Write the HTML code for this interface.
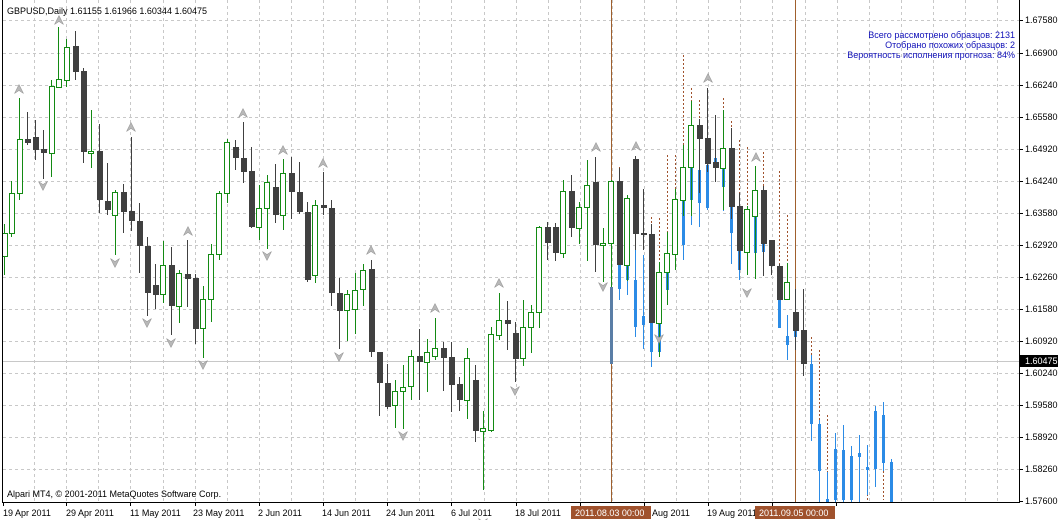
<!DOCTYPE html>
<html><head><meta charset="utf-8"><style>
html,body{margin:0;padding:0;background:#fff;}
body{width:1058px;height:520px;overflow:hidden;position:relative;font-family:"Liberation Sans","DejaVu Sans",sans-serif;}
svg{position:absolute;left:0;top:0;}
text{font-family:"Liberation Sans","DejaVu Sans",sans-serif;font-size:9px;}
</style></head><body>
<svg width="1058" height="520" viewBox="0 0 1058 520" xmlns="http://www.w3.org/2000/svg">
<g stroke="#c8c8c8" stroke-width="1" stroke-dasharray="3,3">
<path d="M3 20.5H1019M3 53.5H1019M3 85.5H1019M3 117.5H1019M3 149.5H1019M3 181.5H1019M3 213.5H1019M3 245.5H1019M3 277.5H1019M3 309.5H1019M3 341.5H1019M3 373.5H1019M3 405.5H1019M3 437.5H1019M3 469.5H1019"/>
<path d="M34.5 0V502M66.5 0V502M98.5 0V502M130.5 0V502M163.5 0V502M195.5 0V502M227.5 0V502M259.5 0V502M291.5 0V502M323.5 0V502M355.5 0V502M387.5 0V502M419.5 0V502M451.5 0V502M484.5 0V502M516.5 0V502M548.5 0V502M580.5 0V502M612.5 0V502M644.5 0V502M676.5 0V502M708.5 0V502M740.5 0V502M772.5 0V502M805.5 0V502M837.5 0V502M869.5 0V502M901.5 0V502M933.5 0V502M965.5 0V502M997.5 0V502"/>
</g>
<path d="M3 361.5H1019" stroke="#c8c8c8"/>
<path d="M611.5 0V502M795.5 0V502" stroke="#a0602d"/>
<g stroke="#a0522d" stroke-dasharray="2,2">
<path d="M619.5 167V181M651.5 217V233M659.5 218V272M667.5 155V253M675.5 155V199M683.5 55V166M691.5 88V125M699.5 100V125M723.5 98V148M731.5 121V148M739.5 140V206M747.5 147V209M763.5 152V190M779.5 171V266M787.5 215V282M811.5 337V364M819.5 350V423M827.5 415V498M867.5 470V500M883.5 463V500"/>
</g>
<g stroke="#2b8be6" fill="#2b8be6">
<path d="M619.5 265V300M627.5 266V295M635.5 250V337M643.5 255V349M651.5 323V367M659.5 323V352M667.5 272V305M683.5 200V260M691.5 168V225M699.5 170V227M707.5 165V210M715.5 115V182M723.5 168V211M731.5 207V264M739.5 250V280M755.5 217V265M763.5 244V260M779.5 300V328M787.5 315V360M795.5 331V350M811.5 355V441M819.5 420V503M827.5 472V503M835.5 433V503M843.5 425V503M851.5 446V503M859.5 435V503M867.5 445V495M875.5 406V487M883.5 402V471M891.5 459V503"/>
<g stroke="none">
<rect x="618" y="265" width="3" height="24"/><rect x="626" y="266" width="3" height="14"/><rect x="634" y="280" width="3" height="47"/><rect x="642" y="316" width="3" height="9"/><rect x="650" y="323" width="3" height="29"/><rect x="658" y="323" width="3" height="29"/><rect x="666" y="272" width="3" height="18"/><rect x="682" y="200" width="3" height="45"/><rect x="690" y="168" width="3" height="32"/><rect x="698" y="170" width="3" height="33"/><rect x="706" y="165" width="3" height="43"/><rect x="714" y="158" width="3" height="10"/><rect x="722" y="168" width="3" height="19"/><rect x="730" y="207" width="3" height="26"/><rect x="738" y="250" width="3" height="20"/><rect x="754" y="217" width="3" height="36"/><rect x="762" y="244" width="3" height="8"/><rect x="778" y="300" width="3" height="28"/><rect x="786" y="336" width="3" height="9"/><rect x="794" y="331" width="3" height="6"/><rect x="810" y="364" width="3" height="60"/><rect x="818" y="424" width="3" height="47"/><rect x="826" y="499" width="3" height="4"/><rect x="834" y="449" width="3" height="51"/><rect x="842" y="450" width="3" height="50"/><rect x="850" y="456" width="3" height="44"/><rect x="858" y="453" width="3" height="4"/><rect x="866" y="467" width="3" height="3"/><rect x="874" y="411" width="3" height="58"/><rect x="882" y="415" width="3" height="48"/><rect x="890" y="462" width="3" height="41"/>
</g></g>
<rect x="610" y="287" width="3" height="77" fill="#5a7ea6"/>
<g stroke="#404040" fill="#404040">
<path d="M27.5 112V145M35.5 120V160M43.5 130V179M75.5 31V80M83.5 68V163M99.5 124V213M107.5 163V215M123.5 184V233M131.5 137V231M139.5 203V273M147.5 237V316M155.5 264V309M171.5 247V335M187.5 240V307M195.5 274V344M235.5 140V170M243.5 122V183M251.5 147V228M275.5 164V223M291.5 157V219M299.5 162V214M307.5 202V282M323.5 172V215M331.5 200V306M339.5 278V349M371.5 260V357M379.5 352V416M387.5 364V409M419.5 329V400M443.5 342V391M451.5 342V412M459.5 377V411M475.5 365V442M507.5 301V350M515.5 322V382M547.5 222V260M555.5 223V261M571.5 175V237M595.5 157V272M619.5 168V265M635.5 156V250M643.5 189V250M651.5 224V323M699.5 119V193M707.5 88V172M715.5 115V182M731.5 128V219M739.5 193V270M763.5 186V276M771.5 240V275M779.5 264V300M795.5 289V350M803.5 289V376"/>
<g stroke="none">
<rect x="25" y="139" width="6" height="4"/><rect x="33" y="137" width="6" height="13"/><rect x="41" y="149" width="6" height="4"/><rect x="73" y="46" width="6" height="26"/><rect x="81" y="71" width="6" height="81"/><rect x="97" y="151" width="6" height="49"/><rect x="105" y="201" width="6" height="9"/><rect x="121" y="192" width="6" height="20"/><rect x="129" y="211" width="6" height="10"/><rect x="137" y="221" width="6" height="25"/><rect x="145" y="246" width="6" height="47"/><rect x="153" y="285" width="6" height="10"/><rect x="169" y="265" width="6" height="41"/><rect x="185" y="274" width="6" height="5"/><rect x="193" y="278" width="6" height="51"/><rect x="233" y="147" width="6" height="11"/><rect x="241" y="158" width="6" height="14"/><rect x="249" y="171" width="6" height="56"/><rect x="273" y="187" width="6" height="28"/><rect x="289" y="173" width="6" height="19"/><rect x="297" y="192" width="6" height="20"/><rect x="305" y="212" width="6" height="68"/><rect x="321" y="205" width="6" height="3"/><rect x="329" y="208" width="6" height="85"/><rect x="337" y="293" width="6" height="18"/><rect x="369" y="269" width="6" height="83"/><rect x="377" y="352" width="6" height="31"/><rect x="385" y="383" width="6" height="24"/><rect x="417" y="356" width="6" height="6"/><rect x="441" y="348" width="6" height="10"/><rect x="449" y="357" width="6" height="28"/><rect x="457" y="384" width="6" height="16"/><rect x="473" y="380" width="6" height="51"/><rect x="505" y="320" width="6" height="4"/><rect x="513" y="333" width="6" height="26"/><rect x="545" y="227" width="6" height="16"/><rect x="553" y="227" width="6" height="26"/><rect x="569" y="191" width="6" height="37"/><rect x="593" y="182" width="6" height="63"/><rect x="617" y="181" width="6" height="84"/><rect x="633" y="159" width="6" height="75"/><rect x="641" y="233" width="6" height="2"/><rect x="649" y="234" width="6" height="89"/><rect x="697" y="125" width="6" height="14"/><rect x="705" y="138" width="6" height="26"/><rect x="713" y="162" width="6" height="6"/><rect x="729" y="148" width="6" height="59"/><rect x="737" y="206" width="6" height="45"/><rect x="761" y="190" width="6" height="54"/><rect x="769" y="240" width="6" height="26"/><rect x="777" y="266" width="6" height="34"/><rect x="793" y="312" width="6" height="19"/><rect x="801" y="330" width="6" height="34"/>
</g></g>
<g stroke="#138a13" fill="#fff">
<path d="M4.5 224V275M11.5 181V237M19.5 98V200M51.5 80V177M58.5 27V88M66.5 39V87M91.5 110V168M115.5 190V255M163.5 241V303M179.5 270V323M203.5 286V358M211.5 244V322M219.5 191V260M227.5 139V203M259.5 185V240M267.5 175V249M283.5 159V230M315.5 200V283M347.5 290V341M355.5 273V334M363.5 264V306M395.5 380V428M403.5 365V429M411.5 350V400M427.5 339V392M435.5 318V360M467.5 348V419M483.5 411V490M491.5 327V432M499.5 293V340M523.5 300V366M531.5 305V353M539.5 226V328M563.5 180V258M579.5 202V244M587.5 160V261M603.5 228V282M611.5 180V287M627.5 195V281M659.5 262V357M667.5 232V305M675.5 189V270M683.5 145V216M691.5 101V216M723.5 110V210M747.5 206V275M755.5 166V279M787.5 263V300"/>
<rect x="2.5" y="233.5" width="5" height="23"/><rect x="9.5" y="193.5" width="5" height="40"/><rect x="17.5" y="139.5" width="5" height="54"/><rect x="49.5" y="86.5" width="5" height="67"/><rect x="56.5" y="79.5" width="5" height="8"/><rect x="64.5" y="47.5" width="5" height="33"/><rect x="88.5" y="151.5" width="5" height="2"/><rect x="112.5" y="192.5" width="5" height="23"/><rect x="160.5" y="265.5" width="5" height="29"/><rect x="176.5" y="273.5" width="5" height="33"/><rect x="200.5" y="299.5" width="5" height="29"/><rect x="208.5" y="254.5" width="5" height="45"/><rect x="216.5" y="193.5" width="5" height="61"/><rect x="224.5" y="142.5" width="5" height="51"/><rect x="256.5" y="208.5" width="5" height="19"/><rect x="264.5" y="182.5" width="5" height="26"/><rect x="280.5" y="173.5" width="5" height="42"/><rect x="312.5" y="205.5" width="5" height="70"/><rect x="344.5" y="294.5" width="5" height="16"/><rect x="352.5" y="290.5" width="5" height="19"/><rect x="360.5" y="270.5" width="5" height="19"/><rect x="392.5" y="391.5" width="5" height="14"/><rect x="400.5" y="387.5" width="5" height="4"/><rect x="408.5" y="356.5" width="5" height="30"/><rect x="424.5" y="352.5" width="5" height="10"/><rect x="432.5" y="348.5" width="5" height="8"/><rect x="464.5" y="358.5" width="5" height="42"/><rect x="480.5" y="428.5" width="5" height="3"/><rect x="488.5" y="334.5" width="5" height="96"/><rect x="496.5" y="320.5" width="5" height="15"/><rect x="520.5" y="327.5" width="5" height="31"/><rect x="528.5" y="312.5" width="5" height="15"/><rect x="536.5" y="227.5" width="5" height="85"/><rect x="560.5" y="191.5" width="5" height="62"/><rect x="576.5" y="207.5" width="5" height="21"/><rect x="584.5" y="185.5" width="5" height="22"/><rect x="600.5" y="243.5" width="5" height="2"/><rect x="608.5" y="181.5" width="5" height="62"/><rect x="624.5" y="198.5" width="5" height="67"/><rect x="656.5" y="272.5" width="5" height="51"/><rect x="664.5" y="253.5" width="5" height="19"/><rect x="672.5" y="199.5" width="5" height="55"/><rect x="680.5" y="167.5" width="5" height="33"/><rect x="688.5" y="125.5" width="5" height="42"/><rect x="720.5" y="148.5" width="5" height="20"/><rect x="744.5" y="209.5" width="5" height="43"/><rect x="752.5" y="190.5" width="5" height="26"/><rect x="784.5" y="282.5" width="5" height="17"/>
</g>
<defs>
<path id="up" d="M-4.5 4.5L0 -4.5L4.5 4.5L0 1.5Z" fill="#b8b8b8" stroke="#8a8a8a" stroke-width="0.5"/>
<path id="dn" d="M-4.5 -4.5L0 4.5L4.5 -4.5L0 -1.5Z" fill="#b8b8b8" stroke="#8a8a8a" stroke-width="0.5"/>
</defs>
<g>
<use href="#up" x="19" y="89"/><use href="#up" x="59" y="20"/><use href="#up" x="131" y="127"/><use href="#up" x="243" y="113"/><use href="#up" x="188" y="231"/><use href="#up" x="283" y="150"/><use href="#up" x="323" y="163"/><use href="#up" x="371" y="250"/><use href="#up" x="435" y="308"/><use href="#up" x="499" y="283"/><use href="#up" x="596" y="147"/><use href="#up" x="636" y="146"/><use href="#up" x="708" y="78"/><use href="#up" x="756" y="157"/>
<use href="#dn" x="43" y="186"/><use href="#dn" x="115" y="263"/><use href="#dn" x="147" y="323"/><use href="#dn" x="171" y="343"/><use href="#dn" x="203" y="365"/><use href="#dn" x="267" y="256"/><use href="#dn" x="339" y="357"/><use href="#dn" x="403" y="436"/><use href="#dn" x="515" y="391"/><use href="#dn" x="483" y="523"/><use href="#dn" x="603" y="287"/><use href="#dn" x="659" y="339"/><use href="#dn" x="747" y="293"/>
</g>
<path d="M2.5 0V502.5H1019.5V0" stroke="#000" fill="none"/>
<g stroke="#000"><path d="M1019 20.5h4M1019 53.5h4M1019 85.5h4M1019 117.5h4M1019 149.5h4M1019 181.5h4M1019 213.5h4M1019 245.5h4M1019 277.5h4M1019 309.5h4M1019 341.5h4M1019 373.5h4M1019 405.5h4M1019 437.5h4M1019 469.5h4M1019 501.5h4"/>
<path d="M3.5 502v4M66.5 502v4M130.5 502v4M195.5 502v4M259.5 502v4M323.5 502v4M387.5 502v4M451.5 502v4M516.5 502v4M580.5 502v4M644.5 502v4M708.5 502v4M772.5 502v4M836.5 502v4"/></g>
<g fill="#000">
<text x="1025" y="23">1.67580</text><text x="1025" y="56">1.66900</text><text x="1025" y="88">1.66240</text><text x="1025" y="120">1.65580</text><text x="1025" y="152">1.64920</text><text x="1025" y="184">1.64240</text><text x="1025" y="216">1.63580</text><text x="1025" y="248">1.62920</text><text x="1025" y="280">1.62260</text><text x="1025" y="312">1.61580</text><text x="1025" y="344">1.60920</text><text x="1025" y="376">1.60240</text><text x="1025" y="408">1.59580</text><text x="1025" y="440">1.58920</text><text x="1025" y="472">1.58260</text><text x="1025" y="504">1.57600</text>
</g>
<rect x="1020" y="355" width="38" height="12" fill="#000"/>
<text x="1025" y="364" fill="#fff">1.60475</text>
<text x="7" y="14" fill="#000">GBPUSD,Daily  1.61155 1.61966 1.60344 1.60475</text>
<text x="7" y="497" fill="#000">Alpari MT4, © 2001-2011 MetaQuotes Software Corp.</text>
<g fill="#1010b8" text-anchor="end">
<text x="1015" y="38">Всего рассмотрено образцов: 2131</text>
<text x="1015" y="48">Отобрано похожих образцов: 2</text>
<text x="1015" y="58">Вероятность исполнения прогноза: 84%</text>
</g>
<g fill="#000">
<text x="3" y="516">19 Apr 2011</text><text x="66" y="516">29 Apr 2011</text><text x="130" y="516">11 May 2011</text><text x="193" y="516">23 May 2011</text><text x="258" y="516">2 Jun 2011</text><text x="322" y="516">14 Jun 2011</text><text x="386" y="516">24 Jun 2011</text><text x="451" y="516">6 Jul 2011</text><text x="515" y="516">18 Jul 2011</text><text x="652" y="516">Aug 2011</text><text x="707" y="516">19 Aug 2011</text>
</g>
<rect x="571" y="506" width="80" height="13" fill="#a0522d"/>
<text x="575" y="516" fill="#fff">2011.08.03 00:00</text>
<rect x="755" y="506" width="80" height="13" fill="#a0522d"/>
<text x="759" y="516" fill="#fff">2011.09.05 00:00</text>
</svg>
</body></html>
